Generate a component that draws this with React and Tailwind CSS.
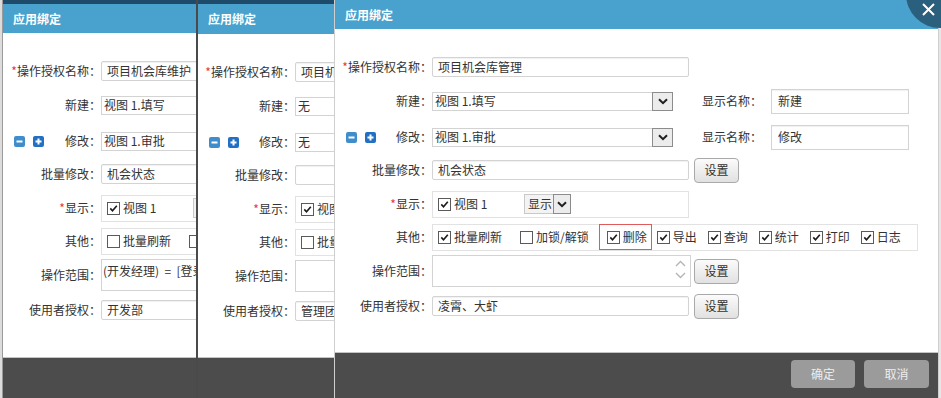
import React from 'react';

const dialogs = [
  {
    name: '项目机会库维护', create: '视图 1.填写', modify: '视图 1.审批', batch: '机会状态',
    refresh: false, scope: '(开发经理)  =  [登录人员]', users: '开发部', createName: '新建', modifyName: '修改',
  },
  {
    name: '项目机会库浏览', create: '无', modify: '无', batch: '',
    refresh: false, scope: '', users: '管理团队', createName: '新建', modifyName: '修改',
  },
  {
    name: '项目机会库管理', create: '视图 1.填写', modify: '视图 1.审批', batch: '机会状态',
    refresh: true, scope: '', users: '凌霄、大虾', createName: '新建', modifyName: '修改',
  },
];

function Check({ checked }) {
  return (
    <span className="flex h-[13px] w-[13px] shrink-0 items-center justify-center border border-[#5a5a5a] bg-white">
      {checked && (
        <svg width="9" height="9" viewBox="0 0 9 9">
          <path d="M1.3 4.4 L3.5 6.8 L7.8 1.8" fill="none" stroke="#1a1a1a" strokeWidth="1.6" />
        </svg>
      )}
    </span>
  );
}

function Chevron() {
  return (
    <svg width="10" height="7" viewBox="0 0 10 7">
      <path d="M1 1.2 L5 5.2 L9 1.2" fill="none" stroke="#1f1f1f" strokeWidth="2" />
    </svg>
  );
}

function Input({ value }) {
  return (
    <div className="flex h-[20px] w-[257px] shrink-0 items-center overflow-hidden whitespace-nowrap rounded-[2px] border border-[#d3d3d3] bg-white pl-[5px] shadow-[inset_0_1px_1px_rgba(0,0,0,0.06)]">
      {value}
    </div>
  );
}

function Select({ value }) {
  return (
    <div className="flex h-[19px] w-[241px] shrink-0 items-center border border-[#d3d3d3] bg-white">
      <span className="flex-1 whitespace-nowrap pl-[2px]">{value}</span>
      <span className="-mr-px flex h-[19px] w-[21px] items-center justify-center border border-[#8c8c8c] bg-[#ececec]">
        <Chevron />
      </span>
    </div>
  );
}

function SetButton({ className }) {
  return (
    <button className={`h-[25px] w-[45px] shrink-0 rounded-[4px] border border-[#a9a9a9] bg-linear-to-b from-[#fbfbfb] to-[#e1e1e1] text-[12px] text-[#333] ${className}`}>
      设置
    </button>
  );
}

function Label({ text, required, labelW, icons }) {
  return (
    <div className={`flex shrink-0 items-center pl-[11px] ${labelW} ${icons ? 'justify-between' : 'justify-end'}`}>
      {icons && (
        <span className="flex items-center gap-[8px]">
          <svg width="11" height="11" viewBox="0 0 11 11">
            <rect width="11" height="11" rx="2" fill="#3f8ecb" />
            <path d="M2.5 5.5h6" stroke="#fff" strokeWidth="2" />
          </svg>
          <svg width="11" height="11" viewBox="0 0 11 11">
            <rect width="11" height="11" rx="2" fill="#2270c3" />
            <path d="M2.5 5.5h6M5.5 2.5v6" stroke="#fff" strokeWidth="2" />
          </svg>
        </span>
      )}
      <span className="whitespace-nowrap">
        {required && <span className="text-[#e53935]">*</span>}
        {text}：
      </span>
    </div>
  );
}

function Item({ checked, text, className = '' }) {
  return (
    <span className={`flex shrink-0 items-center gap-[3px] whitespace-nowrap ${className}`}>
      <Check checked={checked} />
      {text}
    </span>
  );
}

function BindForm({ d, labelW, highlight }) {
  return (
    <div className="flex flex-col text-[12px] leading-[16px] text-[#333]">
      <div className="mt-[28px] flex h-[20px] items-center">
        <Label text="操作授权名称" required labelW={labelW} />
        <Input value={d.name} />
      </div>

      <div className="mt-[11px] flex h-[26px] items-center">
        <Label text="新建" labelW={labelW} />
        <Select value={d.create} />
        <span className="ml-[29px] shrink-0 whitespace-nowrap">显示名称：</span>
        <div className="ml-[9px] flex h-[25px] w-[138px] shrink-0 items-center border border-[#d3d3d3] bg-white pl-[6px] shadow-[inset_0_1px_1px_rgba(0,0,0,0.06)]">
          {d.createName}
        </div>
      </div>

      <div className="mt-[10px] flex h-[26px] items-center">
        <Label text="修改" labelW={labelW} icons />
        <Select value={d.modify} />
        <span className="ml-[29px] shrink-0 whitespace-nowrap">显示名称：</span>
        <div className="ml-[9px] flex h-[25px] w-[138px] shrink-0 items-center border border-[#d3d3d3] bg-white pl-[6px] shadow-[inset_0_1px_1px_rgba(0,0,0,0.06)]">
          {d.modifyName}
        </div>
      </div>

      <div className="mt-[7px] flex h-[26px] items-center">
        <Label text="批量修改" labelW={labelW} />
        <Input value={d.batch} />
        <SetButton className="ml-[5px]" />
      </div>

      <div className="mt-[7px] flex h-[28px] items-center">
        <Label text="显示" required labelW={labelW} />
        <div className="flex h-[27px] w-[257px] shrink-0 items-center border border-[#e2e2e2] bg-white pl-[5px]">
          <Item checked text="视图 1" className="w-[86px]" />
          <div className="flex h-[20px] w-[47px] shrink-0 items-center border border-[#c9c9c9] bg-[#f3f3f3]">
            <span className="flex-1 pl-[3px]">显示</span>
            <span className="-mr-px flex h-[20px] w-[18px] items-center justify-center border border-[#8c8c8c] bg-[#ececec]">
              <Chevron />
            </span>
          </div>
        </div>
      </div>

      <div className="mt-[5px] flex h-[28px] items-center">
        <Label text="其他" labelW={labelW} />
        <div className="flex h-[27px] w-[486px] shrink-0 items-center border border-[#e2e2e2] bg-white pl-[5px]">
          <Item checked={d.refresh} text="批量刷新" />
          <Item checked={false} text="加锁/解锁" className="ml-[18px]" />
          <span className={`ml-[10px] flex h-[26px] shrink-0 items-center pl-[7px] pr-[4px] ${highlight ? 'border border-[#e05a5a]' : 'border border-transparent'}`}>
            <Item checked text="删除" className="gap-[1px]" />
          </span>
          <Item checked text="导出" className="ml-[5px]" />
          <Item checked text="查询" className="ml-[11px]" />
          <Item checked text="统计" className="ml-[11px]" />
          <Item checked text="打印" className="ml-[11px]" />
          <Item checked text="日志" className="ml-[11px]" />
        </div>
      </div>

      <div className="mt-[4px] flex h-[32px] items-center">
        <Label text="操作范围" labelW={labelW} />
        <div className="flex h-[32px] w-[259px] shrink-0 items-start justify-between border border-[#d3d3d3] bg-white">
          <span className="whitespace-pre pl-[1px] pt-[3px]">{d.scope}</span>
          <span className="flex flex-col items-center gap-[5px] pr-[4px] pt-[4px]">
            <svg width="11" height="7" viewBox="0 0 11 7">
              <path d="M1 6 L5.5 1.5 L10 6" fill="none" stroke="#b5b5b5" strokeWidth="1.4" />
            </svg>
            <svg width="11" height="7" viewBox="0 0 11 7">
              <path d="M1 1 L5.5 5.5 L10 1" fill="none" stroke="#b5b5b5" strokeWidth="1.4" />
            </svg>
          </span>
        </div>
        <SetButton className="ml-[3px]" />
      </div>

      <div className="mt-[6px] flex h-[26px] items-center">
        <Label text="使用者授权" labelW={labelW} />
        <Input value={d.users} />
        <SetButton className="ml-[5px]" />
      </div>
    </div>
  );
}

function Header() {
  return (
    <div className="flex h-[29px] shrink-0 items-center bg-[#48a2cd] pl-[10px] text-[12px] font-bold text-white">
      应用绑定
    </div>
  );
}

export default function App() {
  return (
    <div className="relative flex h-[398px] w-[941px] overflow-hidden bg-[#e6e6e6] [font-family:'Noto_Sans_CJK_SC',sans-serif]">
      <div className="w-[2px] shrink-0 bg-[#dcdcdc]" />

      <div className="flex w-[194px] shrink-0 flex-col overflow-hidden border-l border-[#9a9a9a]">
        <div className="h-[4px] shrink-0 bg-[#1e4b69]" />
        <Header />
        <div className="h-[324px] shrink-0 overflow-hidden bg-white">
          <BindForm d={dialogs[0]} labelW="w-[98px]" />
        </div>
        <div className="flex-1 border-t border-[#c4c4c4] bg-[#4c4c4c]" />
      </div>

      <div className="flex w-[138px] shrink-0 flex-col overflow-hidden border-l-2 border-[#4a4a4a]">
        <div className="h-[4px] shrink-0 bg-[#1e4b69]" />
        <div className="flex h-[30px] shrink-0 items-center bg-[#48a2cd] pl-[10px] text-[12px] font-bold text-white">
          应用绑定
        </div>
        <div className="h-[323px] shrink-0 overflow-hidden bg-white">
          <BindForm d={dialogs[1]} labelW="w-[97px]" />
        </div>
        <div className="flex-1 border-t border-[#c4c4c4] bg-[#4c4c4c]" />
      </div>

      <div className="flex w-[605px] shrink-0 flex-col overflow-hidden border-x border-[#cfcfcf]">
        <Header />
        <div className="h-[323px] shrink-0 overflow-hidden bg-white">
          <BindForm d={dialogs[2]} labelW="w-[97px]" highlight />
        </div>
        <div className="flex flex-1 items-start justify-end gap-[9px] border-t border-[#c4c4c4] bg-[#4c4c4c] pr-[9px] pt-[7px]">
          <button className="h-[28px] w-[64px] rounded-[4px] bg-[#9b9b9b] text-[12px] text-[#ededed]">确定</button>
          <button className="h-[28px] w-[65px] rounded-[4px] bg-[#9b9b9b] text-[12px] text-[#ededed]">取消</button>
        </div>
      </div>

      <div className="absolute left-[906px] top-[-40px] h-[68px] w-[68px] rounded-full bg-[#2b5f7e]">
        <svg className="absolute left-[16px] top-[43px]" width="13" height="13" viewBox="0 0 13 13">
          <path d="M1 1 L12 12 M12 1 L1 12" stroke="#fff" strokeWidth="2" />
        </svg>
      </div>
    </div>
  );
}
